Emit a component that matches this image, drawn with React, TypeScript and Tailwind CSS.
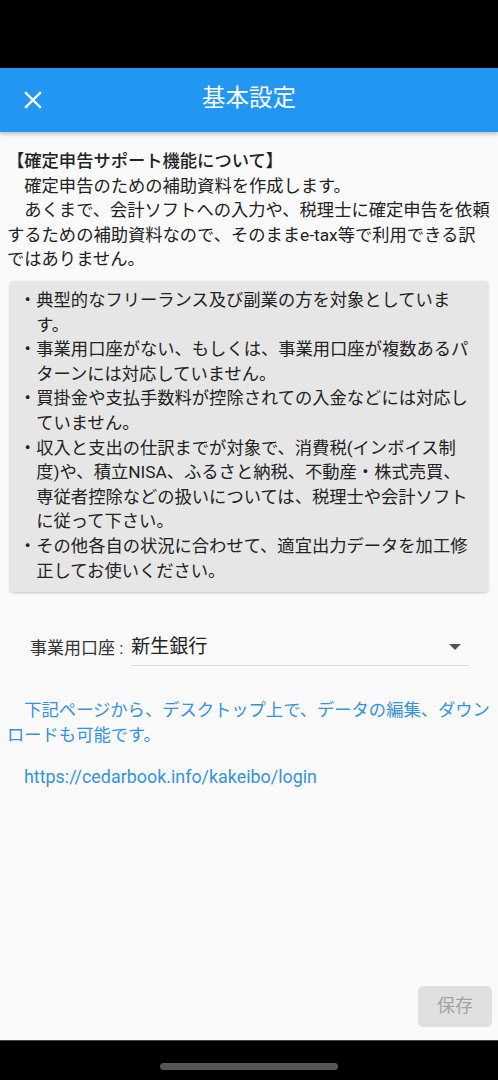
import React from "react";

const font = { fontFamily: 'Roboto, "Noto Sans CJK JP", sans-serif' };

const bullets: string[] = [
  "典型的なフリーランス及び副業の方を対象としています。",
  "事業用口座がない、もしくは、事業用口座が複数あるパターンには対応していません。",
  "買掛金や支払手数料が控除されての入金などには対応していません。",
  "収入と支出の仕訳までが対象で、消費税(インボイス制度)や、積立NISA、ふるさと納税、不動産・株式売買、専従者控除などの扱いについては、税理士や会計ソフトに従って下さい。",
  "その他各自の状況に合わせて、適宜出力データを加工修正してお使いください。",
];

export default function App() {
  return (
    <div
      className="w-[498px] h-[1080px] flex flex-col bg-[#fafafa] overflow-hidden"
      style={font}
    >
      <div className="h-[68px] bg-black shrink-0" />
      <header className="h-[64px] shrink-0 bg-[#2196f3] flex items-center relative shadow-[0_2px_4px_rgba(0,0,0,0.25)] z-10">
        <button className="w-[66px] h-[64px] flex items-center justify-center">
          <svg width="18" height="18" viewBox="0 0 18 18">
            <path d="M2 2 L16 16 M16 2 L2 16" stroke="white" strokeWidth="2.4" strokeLinecap="square" />
          </svg>
        </button>
        <div className="absolute left-0 right-0 text-center text-white text-[23.5px] leading-none pointer-events-none -mt-[2px]">
          基本設定
        </div>
      </header>

      <main className="flex-1 flex flex-col text-[#222] text-[17.3px] leading-[24.6px]">
        <div className="px-[7px] pt-[17px]">
          <div className="font-medium">{"【確定申告サポート機能について】"}</div>
          <div>{"　確定申告のための補助資料を作成します。"}</div>
          <div>{"　あくまで、会計ソフトへの入力や、税理士に確定申告を依頼するための補助資料なので、そのままe-tax等で利用できる訳ではありません。"}</div>
        </div>

        <div className="mx-[10px] mt-[9px] bg-[#e6e6e6] rounded-[4px] shadow-[0_1px_3px_rgba(0,0,0,0.22)] pl-[9px] pr-[12px] pt-[7px] pb-[9px]">
          {bullets.map((b, i) => (
            <div key={i} className="flex">
              <span className="shrink-0">・</span>
              <span>{b}</span>
            </div>
          ))}
        </div>

        <div className="mt-[38px] flex items-stretch pl-[30px] pr-[29px] h-[36px]">
          <div className="flex items-center text-[17px] pr-[8px] text-[#333]">事業用口座 :</div>
          <div className="flex-1 flex items-center justify-between border-b border-[#dddddd] text-[19px]">
            <span className="text-[#222]">新生銀行</span>
            <svg width="12" height="7" viewBox="0 0 12 7" className="mr-[8px]">
              <path d="M0 0 L12 0 L6 6 Z" fill="#555" />
            </svg>
          </div>
        </div>

        <div className="px-[7px] mt-[32px] text-[#3592dc]">
          {"　下記ページから、デスクトップ上で、データの編集、ダウンロードも可能です。"}
        </div>
        <div className="pl-[24px] mt-[18px] text-[#3592dc] text-[17.9px]">
          https://cedarbook.info/kakeibo/login
        </div>

        <div className="flex-1" />
        <div className="flex justify-end pr-[6px] pb-[13px]">
          <button className="w-[74px] h-[41px] rounded-[5px] bg-[#e0e0e0] text-[#a3a3a3] text-[18px]">
            保存
          </button>
        </div>
      </main>

      <div className="h-[40px] shrink-0 bg-black border-t border-[#444] flex items-center justify-center">
        <div className="w-[178px] h-[7px] rounded-full bg-[#555] mt-[12px]" />
      </div>
    </div>
  );
}
